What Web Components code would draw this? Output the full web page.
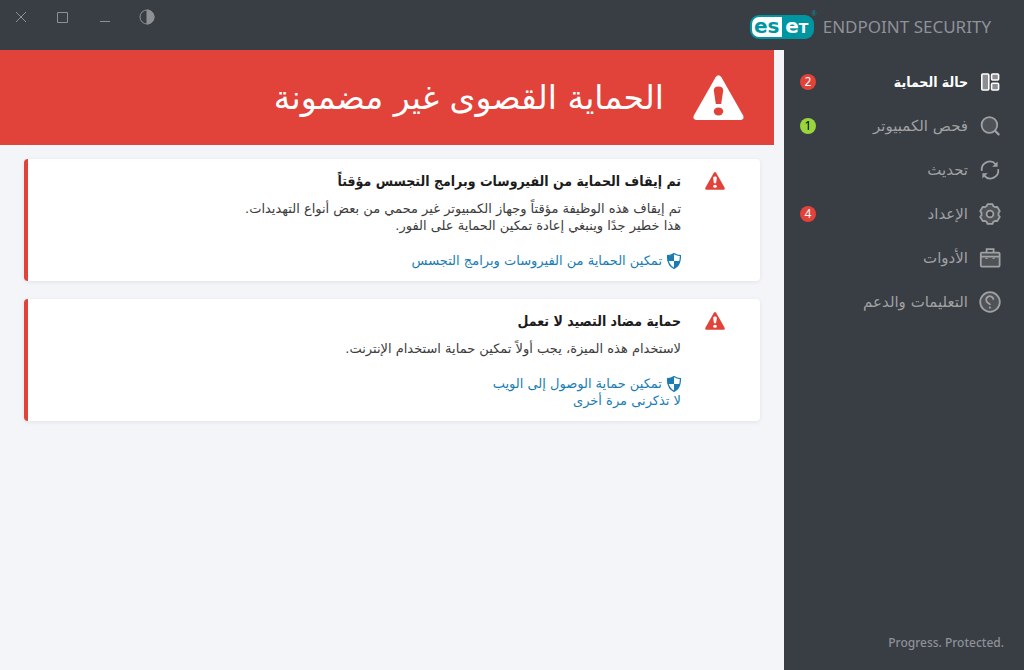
<!DOCTYPE html>
<html lang="ar" dir="rtl">
<head>
<meta charset="utf-8">
<meta name="viewport" content="width=device-width, initial-scale=1">
<title>ESET Endpoint Security</title>
<style>
  body {
    margin: 0;
    font-family: "DejaVu Sans", "Noto Sans", sans-serif;
    font-size: 13px;
    background: #f4f5f8;
  }
</style>
</head>
<body>
<app-window></app-window>

<script>
const icons = {
  panels: `<g fill="#8b8d92" stroke-width="1.6"><rect x="3.8" y="4" width="7" height="16" rx="1"/><rect x="13.6" y="4" width="7" height="6" rx="1"/><rect x="13.6" y="13.200" width="7" height="6.800" rx="1"/></g>`,
  search: `<circle cx="11.4" cy="11" r="7.8" fill="#4f5257"/><path d="M17 16.8l3.6 3.6" stroke-width="2.2" stroke-linecap="round"/>`,
  update: `<path d="M3.8 12.8A8 8 0 0 1 17.6 6.2M20.2 11.2A8 8 0 0 1 6.4 17.8"/><path d="M19.6 3.4v5.4h-5.4zM4.4 20.6v-5.4h5.4z" fill="currentColor" stroke="none"/>`,
  setup: `<path d="M9.5 2.1h5l.7 1.9 2.1 1.2 2-.3 2.5 4.3-1.3 1.6v2.4l1.3 1.6-2.5 4.3-2-.3-2.1 1.2-.7 1.9h-5l-.7-1.9-2.1-1.2-2 .3-2.5-4.3 1.3-1.6v-2.4L2.2 9.2l2.5-4.3 2 .3 2.1-1.2z" fill="#4f5257" stroke-linejoin="round"/><circle cx="12" cy="12" r="3.4" fill="#393d44"/>`,
  tools: `<rect x="2.8" y="6.6" width="18.8" height="14" rx="1" fill="#4f5257"/><path d="M8.6 6.4V3.2h7v3.2M3 10.6h18.4"/><path d="M7.6 12.4h2M14.6 12.4h2" stroke-width="1.2"/>`,
  help: `<circle cx="12" cy="12" r="9.8" fill="#4f5257"/><path d="M15.400 9.800a3.600 3.600 0 1 0-5.600 3c1.400.8 2.100.9 2.100 2.200"/><circle cx="11.900" cy="17.6" r="1.1" fill="currentColor" stroke="none"/>`
};

class WarningIcon extends HTMLElement {
  constructor() {
    super();
    this.attachShadow({mode: 'open'}).innerHTML = `
    <style>
      :host { display: block; flex: none; }
      svg { display: block; width: 100%; }
    </style>
    <svg viewBox="0 0 51 45" aria-hidden="true">
      <path d="M22.6 2.2Q25.5-1.6 28.4 2.2L50 40.2Q51.8 44.6 47.4 45H3.6Q-.8 44.6 1 40.2z" fill="currentColor"/>
      <path d="M20.8 15.4Q20.8 11.6 25.5 11.6T30.2 15.4L28.2 29H22.8z" fill="var(--mark, #fff)"/>
      <ellipse cx="25.5" cy="36.4" rx="4.7" ry="4" fill="var(--mark, #fff)"/>
    </svg>
    `;
  }
}

class ProductLogo extends HTMLElement {
  constructor() {
    super();
    this.attachShadow({mode: 'open'}).innerHTML = `
    <style>
      :host {
        display: flex;
        align-items: center;
        gap: 9px;
        color: #8f9299;
        font: 17px/24px "Noto Sans", sans-serif;
      }
      .badge {
        position: relative;
        box-sizing: border-box;
        display: flex;
        width: 64px;
        height: 24px;
        padding: 2px;
        border-radius: 9px;
        background: #0096a1;
        color: #fff;
        font: bold 20px/18px "DejaVu Sans", sans-serif;
      }
      .badge span {
        flex: 1;
        text-align: center;
      }
      .badge .first {
        background: #fff;
        color: #0096a1;
        border-radius: 7px 0 0 7px;
      }
      .caps { font-variant: small-caps; }
      sup {
        position: absolute;
        top: -5px;
        right: -3px;
        color: #0096a1;
        font: 7px/8px "Liberation Sans", sans-serif;
      }
    </style>
    <div class="badge"><span class="first">es</span><span>e<b class="caps">t</b></span><sup>®</sup></div>
    <slot></slot>
    `;
  }
}

class WindowBar extends HTMLElement {
  constructor() {
    super();
    this.attachShadow({mode: 'open'}).innerHTML = `
    <style>
      :host {
        display: flex;
        justify-content: space-between;
        height: 50px;
        padding: 0 33px 0 10px;
        box-sizing: border-box;
        background: #393d44;
        color: #8f9094;
      }
      .controls {
        display: flex;
        gap: 20px;
        padding-top: 6px;
      }
      button {
        width: 22px;
        height: 22px;
        padding: 0;
        border: 0;
        background: none;
        color: inherit;
      }
      svg { display: block; fill: none; stroke: currentColor; }
      product-logo { padding-top: 4px; }
    </style>
    <product-logo dir="ltr">ENDPOINT SECURITY</product-logo>
    <div class="controls" dir="ltr">
      <button aria-label="إغلاق"><svg width="22" height="22"><path d="M6 6l10 10M16 6L6 16"/></svg></button>
      <button aria-label="تكبير"><svg width="22" height="22"><path d="M5.500 6.500h10v10h-10z"/></svg></button>
      <button aria-label="تصغير"><svg width="22" height="22"><path d="M6 15.500h10"/></svg></button>
      <button aria-label="التباين"><svg width="22" height="22"><circle cx="11" cy="11" r="7"/><path d="M11 4a7 7 0 0 1 0 14z" fill="currentColor"/></svg></button>
    </div>
    `;
  }
}

class NavItem extends HTMLElement {
  connectedCallback() {
    const badge = this.getAttribute('badge');
    this.attachShadow({mode: 'open'}).innerHTML = `
    <style>
      :host { display: block; color: #a0a1a3; }
      a {
        display: flex;
        align-items: center;
        gap: 10px;
        height: 44px;
        padding: 0 22px 0 16px;
        color: inherit;
        text-decoration: none;
        font-size: 15px;
      }
      :host([active]) { color: #fff; }
      :host([active]) .label {
        font: bold 14px/20px "DejaVu Sans Condensed", "DejaVu Sans", sans-serif;
      }
      svg {
        width: 24px;
        height: 24px;
        fill: none;
        stroke: currentColor;
        stroke-width: 1.8;
      }
      .label { flex: 1; }
      .badge {
        width: 16px;
        border-radius: 50%;
        background: #e14239;
        color: #fff;
        font: 12px/16px "Noto Sans", sans-serif;
        text-align: center;
      }
      :host([tone="ok"]) .badge { background: #98d63c; color: #000; }
    </style>
    <a href="#${this.getAttribute('icon')}">
      <svg viewBox="0 0 24 24" aria-hidden="true">${icons[this.getAttribute('icon')]}</svg>
      <span class="label"><slot></slot></span>
      ${badge ? `<span class="badge">${badge}</span>` : ''}
    </a>
    `;
  }
}

class SideNav extends HTMLElement {
  constructor() {
    super();
    this.attachShadow({mode: 'open'}).innerHTML = `
    <style>
      :host {
        display: flex;
        flex-direction: column;
        justify-content: space-between;
        background: #393d44;
      }
      nav { padding-top: 10px; }
      footer {
        padding: 0 20px 18px;
        color: #8f9299;
        font: 500 12px/18px "Noto Sans", sans-serif;
      }
    </style>
    <nav><slot></slot></nav>
    <footer><span dir="ltr">Progress. Protected.</span></footer>
    `;
  }
}

class StatusBanner extends HTMLElement {
  constructor() {
    super();
    this.attachShadow({mode: 'open'}).innerHTML = `
    <style>
      :host {
        display: flex;
        align-items: center;
        gap: 29px;
        min-height: 95px;
        padding: 0 30px;
        box-sizing: border-box;
        background: #e14239;
        color: #fff;
      }
      warning-icon { width: 51px; --mark: #e14239; }
      h1 { margin: 0; font-size: 33px; font-weight: normal; line-height: 44px; }
    </style>
    <warning-icon></warning-icon>
    <h1><slot></slot></h1>
    `;
  }
}

class ActionLink extends HTMLElement {
  connectedCallback() {
    const shield = this.hasAttribute('shield') ? `
      <svg viewBox="0 0 14 16" aria-hidden="true">
        <path d="M7 .6Q9.800 2.600 13.400 2.600Q13.800 12 7 15.400Q.2 12 .6 2.600Q4.200 2.600 7 .6z" fill="#fff" stroke="currentColor" stroke-width="1.200"/>
        <path d="M7 .6V8H.6Q.4 5 .6 2.600Q4.200 2.600 7 .6zM7 8h6.200Q12 13 7 15.400z" fill="currentColor"/>
      </svg>` : '';
    this.attachShadow({mode: 'open'}).innerHTML = `
    <style>
      :host { display: flex; }
      a {
        display: flex;
        align-items: center;
        gap: 5px;
        color: #197db3;
        text-decoration: none;
      }
      svg { width: 14px; height: 16px; }
    </style>
    <a href="#">${shield}<span><slot></slot></span></a>
    `;
  }
}

class AlertCard extends HTMLElement {
  constructor() {
    super();
    this.attachShadow({mode: 'open'}).innerHTML = `
    <style>
      :host {
        display: flex;
        gap: 24px;
        padding: 12px 35px 12px 24px;
        border-left: 4px solid #e14239;
        border-radius: 4px;
        background: #fff;
        box-shadow: 0 1px 4px rgba(0, 0, 0, 0.08);
        color: #3c3c3c;
        line-height: 17px;
      }
      warning-icon { width: 20px; padding-top: 1px; color: #e14239; }
      h2 {
        margin: 0 0 9px;
        color: #1c1c1c;
        font: bold 14px/20px "DejaVu Sans Condensed", "DejaVu Sans", sans-serif;
      }
      .actions { margin-top: 18px; }
    </style>
    <warning-icon></warning-icon>
    <div>
      <h2><slot name="title"></slot></h2>
      <slot></slot>
      <div class="actions"><slot name="action"></slot></div>
    </div>
    `;
  }
}

class AppWindow extends HTMLElement {
  constructor() {
    super();
    this.attachShadow({mode: 'open'}).innerHTML = `
    <style>
      :host {
        display: grid;
        grid-template: auto 1fr / 240px 1fr;
        min-height: 100vh;
      }
      window-bar { grid-column: 1 / -1; }
      main { padding-right: 10px; }
      .cards {
        display: grid;
        gap: 18px;
        padding: 14px 14px 14px 24px;
      }
    </style>
    <window-bar></window-bar>
    <side-nav>
      <nav-item icon="panels" badge="2" active>حالة الحماية</nav-item>
      <nav-item icon="search" badge="1" tone="ok">فحص الكمبيوتر</nav-item>
      <nav-item icon="update">تحديث</nav-item>
      <nav-item icon="setup" badge="4">الإعداد</nav-item>
      <nav-item icon="tools">الأدوات</nav-item>
      <nav-item icon="help">التعليمات والدعم</nav-item>
    </side-nav>
    <main>
      <status-banner>الحماية القصوى غير مضمونة</status-banner>
      <div class="cards">
        <alert-card>
          <span slot="title">تم إيقاف الحماية من الفيروسات وبرامج التجسس مؤقتاً</span>
          تم إيقاف هذه الوظيفة مؤقتاً وجهاز الكمبيوتر غير محمي من بعض أنواع التهديدات.<br>
          هذا خطير جدًا وينبغي إعادة تمكين الحماية على الفور.
          <action-link slot="action" shield>تمكين الحماية من الفيروسات وبرامج التجسس</action-link>
        </alert-card>
        <alert-card>
          <span slot="title">حماية مضاد التصيد لا تعمل</span>
          لاستخدام هذه الميزة، يجب أولاً تمكين حماية استخدام الإنترنت.
          <action-link slot="action" shield>تمكين حماية الوصول إلى الويب</action-link>
          <action-link slot="action">لا تذكرنى مرة أخرى</action-link>
        </alert-card>
      </div>
    </main>
    `;
  }
}

customElements.define('warning-icon', WarningIcon);
customElements.define('product-logo', ProductLogo);
customElements.define('window-bar', WindowBar);
customElements.define('nav-item', NavItem);
customElements.define('side-nav', SideNav);
customElements.define('status-banner', StatusBanner);
customElements.define('action-link', ActionLink);
customElements.define('alert-card', AlertCard);
customElements.define('app-window', AppWindow);
</script>
</body>
</html>
